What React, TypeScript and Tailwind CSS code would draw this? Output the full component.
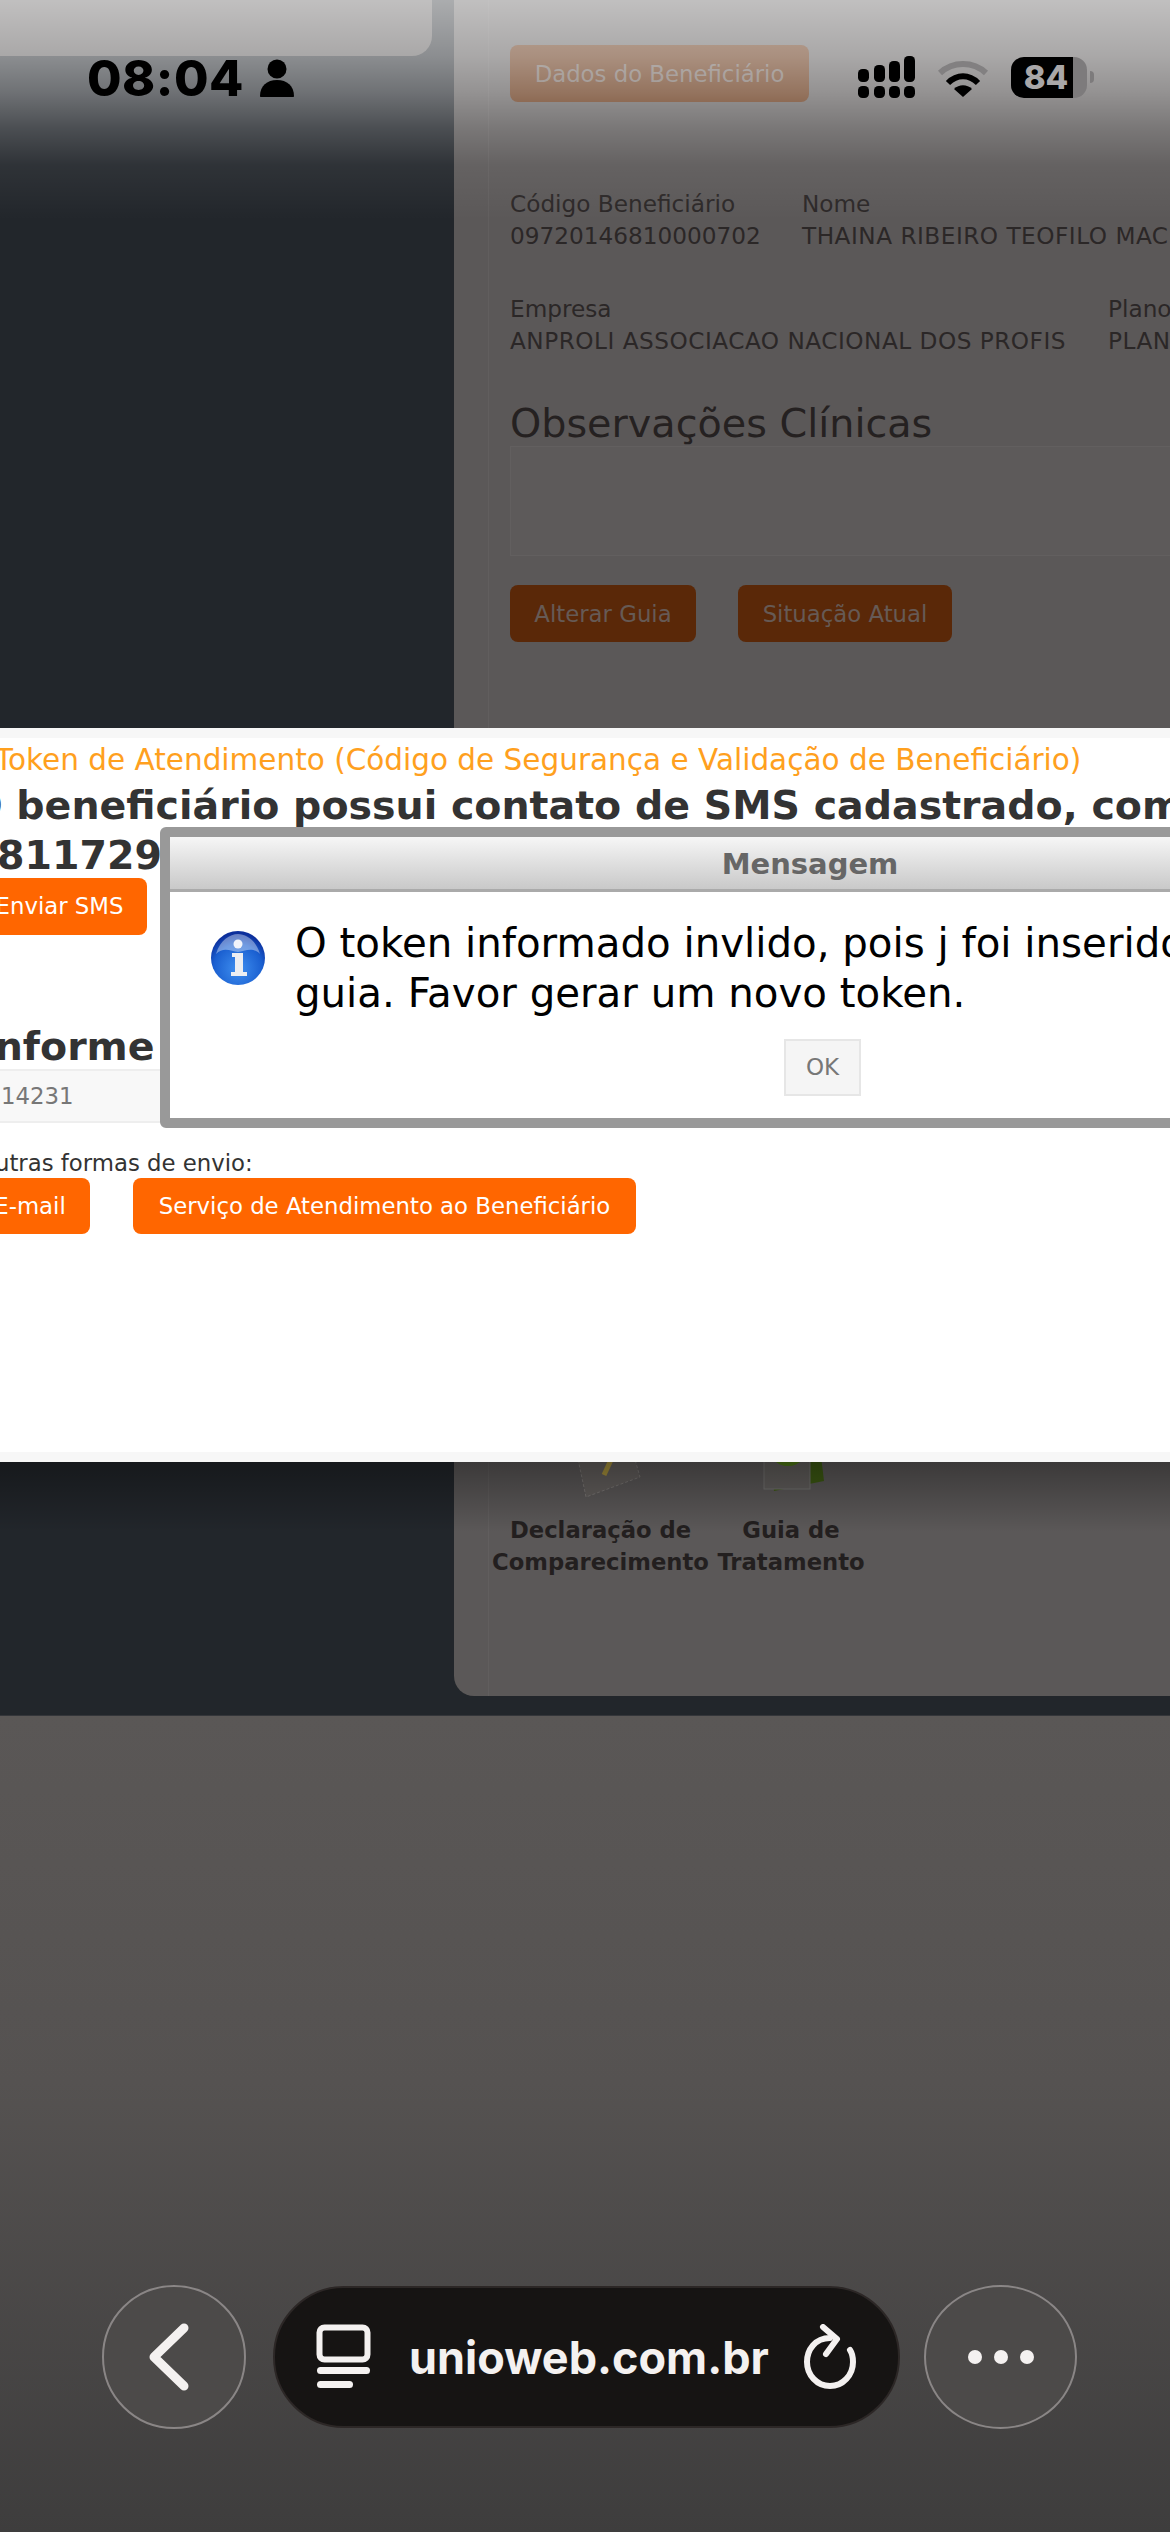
const font = "font-['DejaVu_Sans',sans-serif]";

function StatusBar() {
  return (
    <div className="absolute top-0 left-0 right-0 h-[110px] pointer-events-none">
      <div className="flex items-center pl-[87px] pt-[54px]">
        <span className="font-['Inter',sans-serif] font-extrabold text-[50px] leading-[48px] tracking-[0.5px] text-black">08:04</span>
        <svg width="36" height="38" viewBox="0 0 36 38" className="ml-[15px]">
          <circle cx="18" cy="10" r="9.5" fill="#000" />
          <path d="M1 37c0-10 7-16 17-16s17 6 17 16c0 .6-.4 1-1 1H2c-.6 0-1-.4-1-1z" fill="#000" />
        </svg>
        <svg width="60" height="42" viewBox="0 0 60 42" className="ml-[561px] mt-[-2px]">
          <rect x="2" y="13" width="11" height="13" rx="4.5" fill="#000" />
          <rect x="18" y="9" width="11" height="17" rx="4.5" fill="#000" />
          <rect x="33" y="5" width="11" height="21" rx="4.5" fill="#000" />
          <rect x="48" y="0" width="11" height="26" rx="4.5" fill="#000" />
          <rect x="2" y="30" width="11" height="12" rx="4.5" fill="#000" />
          <rect x="18" y="30" width="11" height="12" rx="4.5" fill="#000" />
          <rect x="33" y="30" width="11" height="12" rx="4.5" fill="#000" />
          <rect x="48" y="30" width="11" height="12" rx="4.5" fill="#000" />
        </svg>
        <svg width="52" height="40" viewBox="0 0 52 40" className="ml-[21px]">
          <path d="M3 15C16 3 36 3 49 15" fill="none" stroke="#828081" strokeWidth="6" />
          <path d="M11 25C20 16 32 16 41 25" fill="none" stroke="#000" strokeWidth="6" />
          <path d="M17 31C22 26 30 26 35 31L26 39z" fill="#000" />
        </svg>
        <div className="ml-[22px] relative w-[76px] h-[41px] rounded-[13px] overflow-hidden bg-[#7d7b7c] flex mt-[-2px]">
          <div className="w-[62px] h-full bg-black flex items-center justify-center">
            <span className="font-['Inter',sans-serif] font-extrabold text-[33px] leading-none text-[#a9a7a8] pl-[8px]">84</span>
          </div>
        </div>
        <div className="w-[4px] h-[12px] ml-[3px] rounded-r-full bg-[#7d7b7c] mt-[-2px]" />
      </div>
    </div>
  );
}

function BehindPanel() {
  return (
    <div className={`flex-1 h-[1696px] rounded-bl-[20px] bg-[#5b5858] overflow-hidden ${font}`}>
      <div className="h-full ml-[34px] border-l border-[#615e5e] pl-[21px] pt-[45px] text-[#2b2727]">
        <div className="w-[299px] h-[57px] pt-[2px] rounded-[8px] bg-[#5c2a0a] flex items-center justify-center text-[22.8px] text-[#6f625c]">Dados do Beneficiário</div>
        <div className="flex mt-[86px] text-[23.2px] leading-[32px] whitespace-nowrap">
          <div className="w-[292px] shrink-0">
            <p>Código Beneficiário</p>
            <p>09720146810000702</p>
          </div>
          <div>
            <p>Nome</p>
            <p className="tracking-[0.5px]">THAINA RIBEIRO TEOFILO MACEDO</p>
          </div>
        </div>
        <div className="flex mt-[41px] text-[23.2px] leading-[32px] whitespace-nowrap">
          <div className="w-[598px] shrink-0">
            <p>Empresa</p>
            <p className="tracking-[0.5px]">ANPROLI ASSOCIACAO NACIONAL DOS PROFIS</p>
          </div>
          <div>
            <p>Plano</p>
            <p className="tracking-[0.5px]">PLANO</p>
          </div>
        </div>
        <h2 className="mt-[42px] text-[39.7px] leading-[48px] font-normal text-[#252121]">Observações Clínicas</h2>
        <div className="mt-[-1px] h-[110px] w-[900px] border border-[#625f5f] bg-[#5d5a5a]" />
        <div className="flex gap-[42px] mt-[29px]">
          <div className="w-[186px] h-[57px] pt-[2px] rounded-[8px] bg-[#5a2808] flex items-center justify-center text-[22.8px] text-[#665a55]">Alterar Guia</div>
          <div className="w-[214px] h-[57px] pt-[2px] rounded-[8px] bg-[#5a2808] flex items-center justify-center text-[22.8px] text-[#665a55]">Situação Atual</div>
        </div>
        <div className="flex gap-[6px] ml-[-19px] mt-[799px]">
          <div className="w-[219px] flex flex-col items-center">
            <svg width="90" height="60" viewBox="0 0 90 60">
              <path d="M14 -20L68 -20L84 36L30 56z" fill="#635f5d" stroke="#7a7674" strokeWidth="1" strokeDasharray="3 2" />
              <path d="M60 8L48 34" stroke="#a8923c" strokeWidth="5" />
              <path d="M60 8L63 2" stroke="#8a3a32" strokeWidth="5" />
            </svg>
            <p className="mt-[13px] font-bold text-[22.7px] leading-[32px] text-center text-[#231f1f] whitespace-nowrap">Declaração de<br />Comparecimento</p>
          </div>
          <div className="w-[150px] flex flex-col items-center">
            <svg width="70" height="60" viewBox="0 0 70 60">
              <path d="M12 -10L62 -10L68 40L18 50z" fill="#3d5a12" />
              <rect x="8" y="-10" width="46" height="58" fill="#615e5c" stroke="#757270" />
              <circle cx="32" cy="4" r="21" fill="#4f7a14" />
              <path d="M24 5L31 13L42 0" fill="none" stroke="#33500c" strokeWidth="4" />
            </svg>
            <p className="mt-[13px] font-bold text-[22.7px] leading-[32px] text-center text-[#231f1f] whitespace-nowrap">Guia de<br />Tratamento</p>
          </div>
        </div>
      </div>
    </div>
  );
}

function InfoIcon() {
  return (
    <svg width="56" height="56" viewBox="0 0 56 56" className="shrink-0">
      <defs>
        <radialGradient id="ball" cx="50%" cy="70%" r="65%">
          <stop offset="0%" stopColor="#3f8ff0" />
          <stop offset="70%" stopColor="#1a5fd0" />
          <stop offset="100%" stopColor="#0c2f9c" />
        </radialGradient>
      </defs>
      <circle cx="28" cy="28" r="27" fill="url(#ball)" />
      <path d="M6 24C10 10 20 4 28 4s18 6 22 20C42 16 34 22 28 22S14 16 6 24z" fill="#ffffff" fillOpacity="0.38" />
      <circle cx="28" cy="14" r="4.5" fill="#f2f4fa" />
      <path d="M22 23h11v19h4v4H21v-4h4V27h-3z" fill="#eceef2" />
    </svg>
  );
}

function TokenDialog() {
  return (
    <div className={`absolute left-[160px] top-[89px] w-[1300px] h-[301px] border-[10px] border-[#999999] rounded-[6px] bg-white ${font}`}>
      <div className="h-[55px] pt-[4px] flex items-center justify-center border-b-[3px] border-[#aaaaaa] bg-gradient-to-b from-[#f6f6f6] to-[#c9c9c9] text-[29px] font-bold text-[#666666]">Mensagem</div>
      <div className="flex items-start gap-[29px] pl-[40px] pt-[38px] pr-[10px]">
        <InfoIcon />
        <div className="text-[40.3px] leading-[50px] text-black whitespace-nowrap mt-[-11px]">
          <p>O token informado invlido, pois j foi inserido</p>
          <p>guia. Favor gerar um novo token.</p>
        </div>
      </div>
      <div className="ml-[614px] mt-[20px] w-[77px] h-[57px] border-2 border-[#e6e6e6] bg-[#f5f5f5] flex items-center justify-center text-[23px] text-[#777777]">OK</div>
    </div>
  );
}

function TokenModal() {
  return (
    <div className={`absolute left-0 right-0 top-[728px] h-[734px] overflow-hidden bg-white border-t-[10px] border-b-[10px] border-[#f7f7f7] ${font} whitespace-nowrap`}>
      <p className="ml-[-5px] text-[29.5px] leading-[40px] text-[#ffa01e] mt-[2px]">Token de Atendimento (Código de Segurança e Validação de Beneficiário)</p>
      <p className="ml-[-31px] text-[39.5px] leading-[50px] font-bold text-[#333333]">O beneficiário possui contato de SMS cadastrado, com final</p>
      <p className="ml-[-3px] text-[39.5px] leading-[50px] font-bold text-[#333333]">811729</p>
      <div className="ml-[-28px] mt-[-2px] w-[175px] h-[57px] rounded-[8px] bg-[#ff6600] flex items-center justify-center text-[22.8px] text-white">Enviar SMS</div>
      <p className="ml-[-20px] mt-[86px] text-[39.5px] leading-[50px] font-bold text-[#333333]">Informe</p>
      <div className="mt-[-2px] h-[54px] border-y-2 border-[#eeeeee] bg-[#f8f8f8] pl-[1px] text-[22.8px] leading-[50px] text-[#777777]">14231</div>
      <p className="ml-[-23px] mt-[25px] text-[22.8px] leading-[30px] text-[#333333]">Outras formas de envio:</p>
      <div className="flex gap-[43px] ml-[-30px]">
        <div className="w-[120px] h-[56px] rounded-[8px] bg-[#ff6600] flex items-center justify-center text-[22.8px] text-white">E-mail</div>
        <div className="w-[503px] h-[56px] rounded-[8px] bg-[#ff6600] flex items-center justify-center text-[22.8px] text-white">Serviço de Atendimento ao Beneficiário</div>
      </div>
      <TokenDialog />
    </div>
  );
}

function BrowserBar() {
  return (
    <div className="flex items-center pl-[102px] pb-[103px] mt-auto">
      <div className="w-[144px] h-[144px] rounded-full border-2 border-[#8a8686] bg-[#4c4a49] flex items-center justify-center pr-[10px]">
        <svg width="46" height="70" viewBox="0 0 46 70">
          <path d="M38 6L8 35L38 64" fill="none" stroke="#f4f1f0" strokeWidth="9" strokeLinecap="round" strokeLinejoin="round" />
        </svg>
      </div>
      <div className="ml-[27px] w-[627px] h-[142px] rounded-[71px] bg-[#161413] border-2 border-[#2c2726] flex items-center">
        <svg width="56" height="66" viewBox="0 0 56 66" className="ml-[41px]">
          <rect x="3.5" y="3.5" width="48" height="32" rx="5" fill="none" stroke="#f4f1f0" strokeWidth="6" />
          <rect x="1" y="43" width="53" height="7" rx="3.5" fill="#f4f1f0" />
          <rect x="1" y="57" width="36" height="7" rx="3.5" fill="#f4f1f0" />
        </svg>
        <span className="ml-[37px] font-['Inter',sans-serif] font-bold text-[45px] leading-none text-[#f4f1f0]">unioweb.com.br</span>
        <svg width="54" height="66" viewBox="0 0 54 66" className="ml-[34px]">
          <path d="M27 14C12 14 4 26 4 38c0 13 10 24 23 24s23-11 23-24c0-5-1-9-3-12" fill="none" stroke="#f4f1f0" strokeWidth="6" strokeLinecap="round" />
          <path d="M20 3L34 15L23 30" fill="none" stroke="#f4f1f0" strokeWidth="6" strokeLinecap="round" strokeLinejoin="round" />
        </svg>
      </div>
      <div className="ml-[24px] w-[153px] h-[144px] rounded-[50%] border-2 border-[#8a8686] bg-[#4c4a49] flex items-center justify-center gap-[12px]">
        <span className="w-[14px] h-[14px] rounded-full bg-[#f4f1f0]" />
        <span className="w-[14px] h-[14px] rounded-full bg-[#f4f1f0]" />
        <span className="w-[14px] h-[14px] rounded-full bg-[#f4f1f0]" />
      </div>
    </div>
  );
}

export default function App() {
  return (
    <div className="relative w-[1170px] h-[2532px] overflow-hidden flex flex-col bg-[#22262b]">
      <div className="h-[1716px] shrink-0 flex items-start border-b border-[#34363a]">
        <div className="w-[432px] h-[56px] bg-[#5b5858] rounded-br-[20px] shrink-0" />
        <div className="w-[22px] shrink-0" />
        <BehindPanel />
      </div>
      <div className="flex-1 flex flex-col bg-[linear-gradient(to_bottom,#5a5756_0%,#555251_45%,#3e3d3d_100%)]">
        <BrowserBar />
      </div>
      <div className="absolute top-0 left-0 right-0 h-[220px] pointer-events-none bg-[linear-gradient(to_bottom,rgba(255,255,255,0.62)_0px,rgba(255,255,255,0.48)_56px,rgba(255,255,255,0.35)_92px,rgba(255,255,255,0.19)_128px,rgba(255,255,255,0.06)_165px,rgba(255,255,255,0)_220px)]" />
      <div className="absolute top-[1462px] left-0 right-0 h-[70px] pointer-events-none bg-gradient-to-b from-[#00000059] to-transparent" />
      <TokenModal />
      <StatusBar />
    </div>
  );
}
